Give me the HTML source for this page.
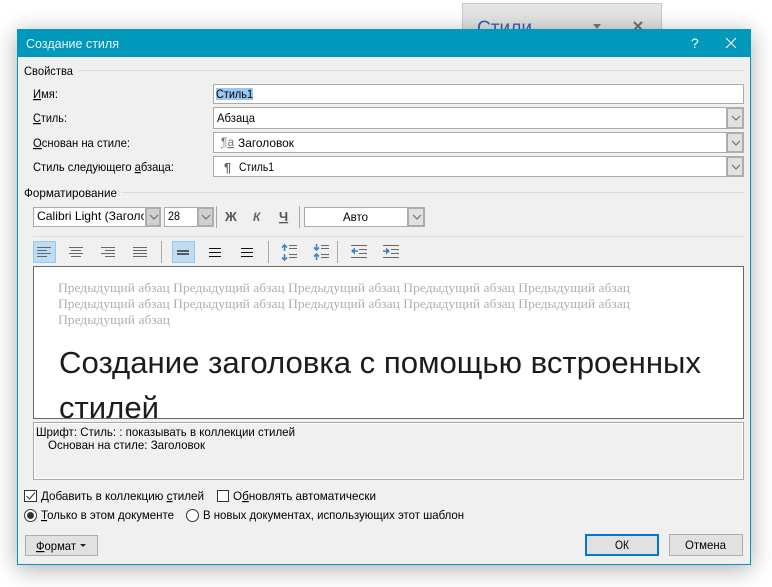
<!DOCTYPE html>
<html><head><meta charset="utf-8">
<style>
html,body{margin:0;padding:0;background:#fff}
body{width:772px;height:587px;position:relative;overflow:hidden;font-family:"Liberation Sans",sans-serif;font-size:12px;color:#111}
.a{position:absolute;box-sizing:border-box}
.f{position:absolute;box-sizing:border-box;background:#fff;border:1px solid #ababab}
.b{position:absolute;box-sizing:border-box;background:#e1e1e1;border:2px solid #adadad}
.b svg{position:absolute;left:3px;top:50%;margin-top:-3px}
.l{position:absolute;height:1px;background:#dcdcdc}
.s{position:absolute;width:1px;background:#a8a8a8}
.h{position:absolute;box-sizing:border-box;width:23px;height:22px;background:#c0dcf3;border:1px solid #90c8f6;top:241px}
svg{position:absolute;overflow:visible}
text{font-family:"Liberation Sans",sans-serif;font-size:12px;fill:#000;white-space:pre}
.u{text-decoration:underline}
.g{font-family:"Liberation Serif",serif;font-size:13px;fill:#b0b0b0}
.hd{font-size:31px;fill:#1c1c1c}
</style></head><body>
<div class="a" style="left:462px;top:3px;width:200px;height:40px;background:linear-gradient(#e6e6e6,#dedede);border:1px solid #c8c8c8"></div>
<svg style="left:0;top:0" width="772" height="29">
<text x="477" y="35" textLength="55" lengthAdjust="spacingAndGlyphs" style="font-size:21px;fill:#3a62b4">Стили</text>
<path d="M593 24h8l-4 5z" fill="#7a7a7a"/>
<path d="M634 22l8 8M642 22l-8 8" stroke="#707070" stroke-width="2"/>
</svg>

<div class="a" style="left:17px;top:29px;width:734px;height:536px;background:#f0f0f0;border:1px solid #0099bc;box-shadow:0 4px 22px rgba(0,0,0,.33)"></div>
<div class="a" style="left:17px;top:29px;width:734px;height:28px;background:#0099bc"></div>

<div class="l" style="left:78px;top:70px;width:666px"></div>
<div class="f" style="left:213px;top:84px;width:531px;height:20px"></div>
<div class="a" style="left:216px;top:88px;width:37px;height:12px;background:#99c9f2"></div>

<div class="f" style="left:213px;top:107px;width:531px;height:22px"></div>
<div class="b" style="left:726px;top:107px;width:18px;height:22px"><svg width="10" height="6"><path d="M1 1l4 4 4-4" fill="none" stroke="#666"/></svg></div>
<div class="f" style="left:213px;top:132px;width:531px;height:21px"></div>
<div class="b" style="left:726px;top:132px;width:18px;height:21px"><svg width="10" height="6"><path d="M1 1l4 4 4-4" fill="none" stroke="#666"/></svg></div>
<div class="f" style="left:213px;top:156px;width:531px;height:21px"></div>
<div class="b" style="left:726px;top:156px;width:18px;height:21px"><svg width="10" height="6"><path d="M1 1l4 4 4-4" fill="none" stroke="#666"/></svg></div>

<div class="l" style="left:122px;top:192px;width:622px"></div>

<div class="f" style="left:33px;top:207px;width:128px;height:20px"></div>
<div class="b" style="left:145px;top:207px;width:16px;height:20px;background:#d0d0d0"><svg width="10" height="6" style="left:2px"><path d="M1 1l4 4 4-4" fill="none" stroke="#666"/></svg></div>
<div class="f" style="left:164px;top:207px;width:50px;height:20px"></div>
<div class="b" style="left:197px;top:207px;width:17px;height:20px;background:#d0d0d0"><svg width="10" height="6" style="left:2px"><path d="M1 1l4 4 4-4" fill="none" stroke="#666"/></svg></div>
<div class="s" style="left:216px;top:206px;height:22px"></div>
<div class="s" style="left:299px;top:206px;height:22px"></div>
<div class="f" style="left:304px;top:207px;width:121px;height:20px"></div>
<div class="b" style="left:407px;top:207px;width:18px;height:20px"><svg width="10" height="6"><path d="M1 1l4 4 4-4" fill="none" stroke="#666"/></svg></div>

<div class="l" style="left:33px;top:236px;width:711px"></div>

<div class="h" style="left:33px"></div>
<div class="h" style="left:172px"></div>
<div class="s" style="left:161px;top:241px;height:22px"></div>
<div class="s" style="left:268px;top:241px;height:22px"></div>
<div class="s" style="left:337px;top:241px;height:22px"></div>

<div class="a" style="left:33px;top:266px;width:711px;height:153px;background:#fff;border:1px solid #696969"></div>
<div class="a" style="left:33px;top:422px;width:711px;height:58px;border:1px solid #a8a8a8;box-shadow:inset 0 0 0 1px #fff"></div>

<div class="a" style="left:24px;top:490px;width:13px;height:12px;background:#fff;border:1px solid #333"></div>
<div class="a" style="left:217px;top:490px;width:12px;height:12px;background:#fff;border:1px solid #333"></div>
<div class="a" style="left:24px;top:509px;width:13px;height:13px;border-radius:50%;background:#fff;border:1px solid #333"></div>
<div class="a" style="left:27px;top:512px;width:7px;height:7px;border-radius:50%;background:#333"></div>
<div class="a" style="left:186px;top:509px;width:13px;height:13px;border-radius:50%;background:#fff;border:1px solid #333"></div>

<div class="a" style="left:25px;top:535px;width:73px;height:21px;background:#e1e1e1;border:1px solid #adadad"></div>
<div class="a" style="left:585px;top:534px;width:74px;height:22px;background:#e1e1e1;border:2px solid #0078d7"></div>
<div class="a" style="left:669px;top:534px;width:74px;height:22px;background:#e1e1e1;border:1px solid #adadad"></div>

<svg style="left:0;top:0" width="772" height="587">
<defs>
<clipPath id="c1"><rect x="35" y="208" width="109" height="18"/></clipPath>
<clipPath id="c2"><rect x="34" y="267" width="709" height="151"/></clipPath>
</defs>
<g fill="none" stroke="#666" stroke-width="1">
<path d="M37 247.500h14M37 250.500h10M37 253.500h14M37 256.500h10"/>
<path d="M69 247.500h14M71 250.500h10M69 253.500h14M71 256.500h10"/>
<path d="M101 247.500h14M105 250.500h10M101 253.500h14M105 256.500h10"/>
<path d="M133 247.500h14M133 250.500h14M133 253.500h14M133 256.500h14"/>
<path d="M177 251h12M177 254h12" stroke="#111" stroke-width="1.300"/>
<path d="M209 248.500h12M209 252.500h12M209 256.500h12" stroke="#111"/>
<path d="M241 248.500h12M241 252.500h12M241 256.500h12" stroke="#111"/>
<path d="M289 245.500h8M289 248.500h8M289 254.500h8M289 257.500h8"/>
<path d="M321 245.500h8M321 248.500h8M321 254.500h8M321 257.500h8"/>
<path d="M351 245.500h16M359 249.500h8M359 253.500h8M351 257.500h16"/>
<path d="M383 245.500h16M391 249.500h8M391 253.500h8M383 257.500h16"/>
<g stroke="#3d85c6" stroke-width="1.600">
<path d="M284.500 245v6M282 247.500l2.500-2.500 2.500 2.500"/>
<path d="M284.500 254v6M282 257.500l2.500 2.500 2.500-2.500"/>
<path d="M316.500 244v6M314 247.500l2.500 2.500 2.500-2.500"/>
<path d="M316.500 254v6M314 256.500l2.500-2.500 2.500 2.500"/>
<path d="M354 251h4M383 251h4"/>
</g>
<path d="M351 251l4-3.500v7zM390 251l-4-3.500v7z" fill="#3d85c6" stroke="none"/>
<path d="M26.500 496l3 3 5.500-6.500" stroke="#333"/>
</g>
<path d="M80 544h6l-3 3z" fill="#222"/>
<path d="M726 38l10 10M736 38l-10 10" stroke="#fff" stroke-width="1"/>

<text x="26" y="48" textLength="93" lengthAdjust="spacingAndGlyphs" style="fill:#e6f5f8;font-size:12.500px">Создание стиля</text>
<text x="691" y="48" style="fill:#fff;font-size:14px">?</text>

<text x="24" y="75" textLength="49" lengthAdjust="spacingAndGlyphs">Свойства</text>
<text x="33" y="98" textLength="25" lengthAdjust="spacingAndGlyphs"><tspan class="u">И</tspan>мя:</text>
<text x="33" y="122" textLength="34" lengthAdjust="spacingAndGlyphs"><tspan class="u">С</tspan>тиль:</text>
<text x="33" y="147" textLength="97" lengthAdjust="spacingAndGlyphs"><tspan class="u">О</tspan>снован на стиле:</text>
<text x="33" y="171" textLength="141" lengthAdjust="spacingAndGlyphs">Стиль следующего <tspan class="u">а</tspan>бзаца:</text>
<text x="216" y="98" textLength="37" lengthAdjust="spacingAndGlyphs">Стиль1</text>
<text x="217" y="122" textLength="38" lengthAdjust="spacingAndGlyphs">Абзаца</text>
<text x="221" y="146" style="fill:#777;font-size:12px" class="u">¶a</text>
<text x="238" y="147" textLength="56" lengthAdjust="spacingAndGlyphs">Заголовок</text>
<text x="224" y="172" style="fill:#666;font-size:13px;font-weight:bold">¶</text>
<text x="239" y="171" textLength="35" lengthAdjust="spacingAndGlyphs">Стиль1</text>

<text x="24" y="197" textLength="93" lengthAdjust="spacingAndGlyphs">Форматирование</text>
<g clip-path="url(#c1)"><text x="37" y="220" textLength="133" lengthAdjust="spacingAndGlyphs">Calibri Light (Заголовки)</text></g>
<text x="168" y="220" textLength="12" lengthAdjust="spacingAndGlyphs">28</text>
<text x="225" y="221" style="font-weight:bold;font-size:13px;fill:#555">Ж</text>
<text x="253" y="221" style="font-weight:bold;font-style:italic;font-size:12px;fill:#666">К</text>
<text x="279" y="221" style="font-weight:bold;font-size:13px;fill:#555" class="u">Ч</text>
<text x="343" y="221" textLength="25" lengthAdjust="spacingAndGlyphs">Авто</text>

<text class="g" x="58" y="292" textLength="572" lengthAdjust="spacingAndGlyphs">Предыдущий абзац Предыдущий абзац Предыдущий абзац Предыдущий абзац Предыдущий абзац</text>
<text class="g" x="58" y="308" textLength="572" lengthAdjust="spacingAndGlyphs">Предыдущий абзац Предыдущий абзац Предыдущий абзац Предыдущий абзац Предыдущий абзац</text>
<text class="g" x="58" y="324" textLength="112" lengthAdjust="spacingAndGlyphs">Предыдущий абзац</text>
<g clip-path="url(#c2)">
<text class="hd" x="59" y="373" textLength="642" lengthAdjust="spacingAndGlyphs">Создание заголовка с помощью встроенных</text>
<text class="hd" x="59" y="418" textLength="100" lengthAdjust="spacingAndGlyphs">стилей</text>
</g>

<text x="36" y="436" textLength="259" lengthAdjust="spacingAndGlyphs">Шрифт: Стиль: : показывать в коллекции стилей</text>
<text x="48" y="449" textLength="157" lengthAdjust="spacingAndGlyphs">Основан на стиле: Заголовок</text>

<text x="41" y="500" textLength="163" lengthAdjust="spacingAndGlyphs">Добавить в коллекцию <tspan class="u">с</tspan>тилей</text>
<text x="233" y="500" textLength="143" lengthAdjust="spacingAndGlyphs">О<tspan class="u">б</tspan>новлять автоматически</text>
<text x="41" y="519" textLength="133" lengthAdjust="spacingAndGlyphs"><tspan class="u">Т</tspan>олько в этом документе</text>
<text x="203" y="519" textLength="261" lengthAdjust="spacingAndGlyphs">В новых документах, использующих этот шаблон</text>

<text x="36" y="550" textLength="40" lengthAdjust="spacingAndGlyphs"><tspan class="u">Ф</tspan>ормат</text>
<text x="615" y="549" textLength="14" lengthAdjust="spacingAndGlyphs">ОК</text>
<text x="685" y="549" textLength="41" lengthAdjust="spacingAndGlyphs">Отмена</text>
</svg>
</body></html>
